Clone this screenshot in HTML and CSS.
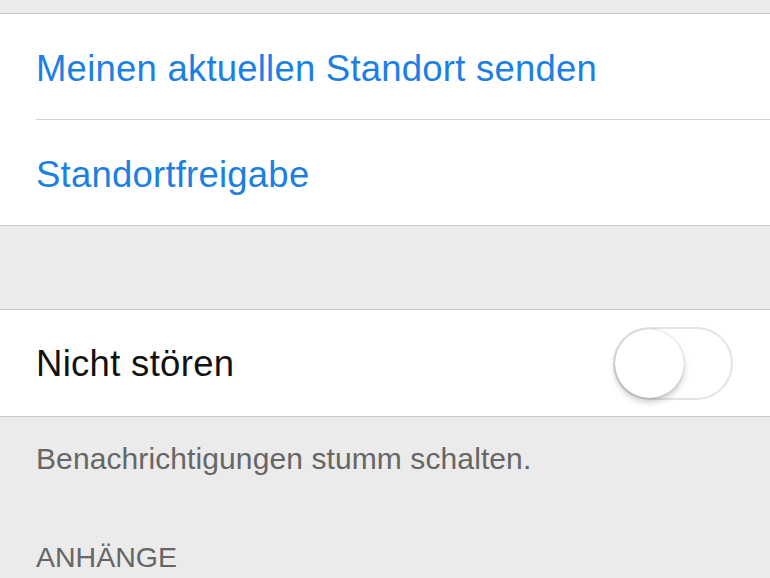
FILE: index.html
```html
<!DOCTYPE html>
<html lang="de">
<head>
<meta charset="utf-8">
<link rel="stylesheet" href="styles.css">
</head>
<body>
<div class="top-gap"></div>
<section class="group">
  <div class="row"><div class="cell cell-sep"><span class="link">Meinen aktuellen Standort senden</span></div></div>
  <div class="row"><div class="cell"><span class="link">Standortfreigabe</span></div></div>
</section>
<div class="mid-gap"></div>
<section class="group">
  <div class="row row-tall">
    <div class="cell">
      <span class="label">Nicht stören</span>
      <div class="switch"><div class="knob"></div></div>
    </div>
  </div>
</section>
<div class="footer">
  <p class="note">Benachrichtigungen stumm schalten.</p>
  <p class="header">ANHÄNGE</p>
</div>
</body>
</html>
```
FILE: styles.css
```css
html, body {
  margin: 0;
  padding: 0;
}
body {
  background: #ebebeb;
  font-family: "Liberation Sans", Arial, sans-serif;
  width: 770px;
  height: 578px;
  overflow: hidden;
}
.top-gap {
  height: 13px;
}
.group {
  background: #ffffff;
  border-top: 1px solid #c8c8c8;
  border-bottom: 1px solid #c8c8c8;
}
.row {
  padding-left: 36px;
}
.cell {
  height: 105px;
  display: flex;
  align-items: center;
  justify-content: space-between;
  padding-right: 37px;
}
.cell-sep {
  height: 105px;
  border-bottom: 1px solid #d0d0d0;
}
.row-tall .cell {
  height: 106px;
}
.link {
  color: #1c7fe3;
  font-size: 36.5px;
  letter-spacing: 0.22px;
  position: relative;
  top: 2px;
}
.label {
  color: #111111;
  font-size: 36.5px;
  letter-spacing: 0.3px;
  position: relative;
  top: 1px;
}
.mid-gap {
  height: 83px;
}
.switch {
  box-sizing: border-box;
  width: 120px;
  height: 73px;
  border: 2px solid #e4e4e4;
  border-radius: 37px;
  background: #ffffff;
  display: flex;
  align-items: center;
}
.knob {
  width: 69px;
  height: 69px;
  border-radius: 50%;
  background: #ffffff;
  box-shadow: 0 4px 6px rgba(0, 0, 0, 0.22), 0 0 1px rgba(0, 0, 0, 0.35);
}
.footer {
  padding: 24px 36px 0;
}
.note {
  margin: 0;
  font-size: 30px;
  line-height: 36px;
  letter-spacing: 0.1px;
  color: #666666;
}
.header {
  margin: 63px 0 0;
  font-size: 28.5px;
  line-height: 34px;
  color: #666666;
}
```
